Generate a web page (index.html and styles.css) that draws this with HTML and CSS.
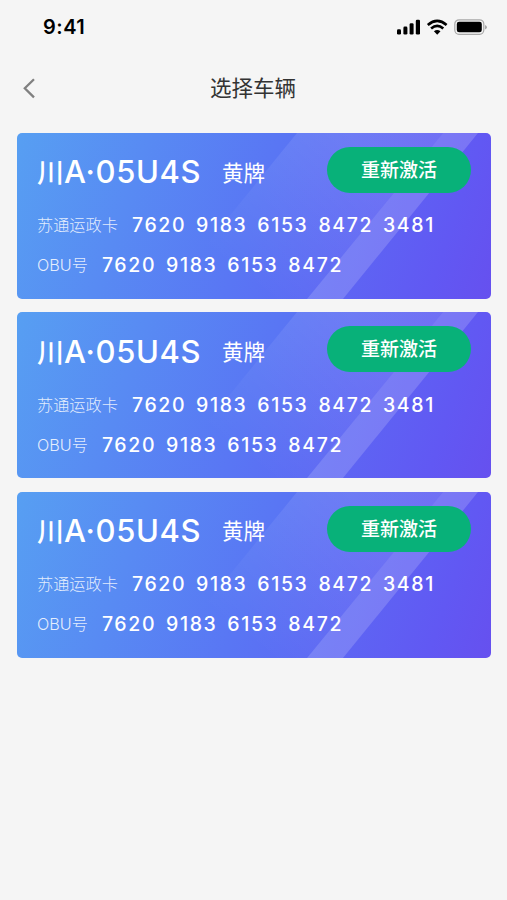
FILE: index.html
```html
<!DOCTYPE html>
<html lang="zh-CN">
<head>
<meta charset="utf-8">
<title>选择车辆</title>
<link rel="stylesheet" href="styles.css">
</head>
<body>
<svg width="0" height="0" class="defs" aria-hidden="true">
  <defs>
    <linearGradient id="haze" gradientUnits="userSpaceOnUse" x1="330" y1="0" x2="220" y2="140">
      <stop offset="0" stop-color="#fff" stop-opacity=".11"/>
      <stop offset="1" stop-color="#fff" stop-opacity="0"/>
    </linearGradient>
    <symbol id="shine" viewBox="0 0 474 166">
      <path d="M280 0H426L290 166H145Z" fill="url(#haze)"/>
      <path d="M426 0H461L326 166H290Z" fill="#fff" fill-opacity=".17"/>
    </symbol>
  </defs>
</svg>
<header class="status">
  <span class="time">9:41</span>
  <svg class="indicators" width="92" height="18" viewBox="0 0 92 18">
    <rect x="2" y="11.2" width="4" height="5.3" rx="1.3"/>
    <rect x="8.4" y="8.6" width="4" height="7.9" rx="1.3"/>
    <rect x="14.6" y="5.3" width="4" height="11.2" rx="1.3"/>
    <rect x="20.8" y="1.8" width="4.2" height="14.7" rx="1.3"/>
    <g fill="none" stroke="#000" stroke-width="2.6">
      <path d="M32.8 6.9Q42.2-1.3 51.6 6.9"/>
      <path d="M36.1 10.5Q42.2 5.1 48.3 10.5"/>
    </g>
    <path d="M38.9 13.2Q42.2 10.6 45.5 13.2L42.2 16.8Z"/>
    <rect x="59.8" y="1.8" width="29" height="14.5" rx="4.2" fill="none" stroke="#a8a8a8" stroke-width="1.2"/>
    <rect x="61.8" y="3.8" width="25" height="10.5" rx="2.3"/>
    <path d="M90 7Q92 8 92 9.2T90 11.6Z" fill="#a8a8a8"/>
  </svg>
</header>
<nav class="nav">
  <svg class="back" width="14" height="22" viewBox="0 0 14 22"><path d="M12 2.2L2.8 11.3L12 20.4" fill="none" stroke="#808080" stroke-width="2.3"/></svg>
  <h1>选择车辆</h1>
</nav>
<main class="cards">
  <section class="card">
    <svg class="shine"><use href="#shine"/></svg>
    <div class="top"><span class="plate"><span class="province">川</span>A·05U4S</span><span class="color">黄牌</span><button>重新激活</button></div>
    <div class="row"><span class="label">苏通运政卡</span><span class="number">7620 9183 6153 8472 3481</span></div>
    <div class="row"><span class="label">OBU号</span><span class="number">7620 9183 6153 8472</span></div>
  </section>
  <section class="card">
    <svg class="shine"><use href="#shine"/></svg>
    <div class="top"><span class="plate"><span class="province">川</span>A·05U4S</span><span class="color">黄牌</span><button>重新激活</button></div>
    <div class="row"><span class="label">苏通运政卡</span><span class="number">7620 9183 6153 8472 3481</span></div>
    <div class="row"><span class="label">OBU号</span><span class="number">7620 9183 6153 8472</span></div>
  </section>
  <section class="card">
    <svg class="shine"><use href="#shine"/></svg>
    <div class="top"><span class="plate"><span class="province">川</span>A·05U4S</span><span class="color">黄牌</span><button>重新激活</button></div>
    <div class="row"><span class="label">苏通运政卡</span><span class="number">7620 9183 6153 8472 3481</span></div>
    <div class="row"><span class="label">OBU号</span><span class="number">7620 9183 6153 8472</span></div>
  </section>
</main>
</body>
</html>
```
FILE: styles.css
```css
* { box-sizing: border-box; }
body {
  margin: 0;
  min-height: 900px;
  background: #f5f5f5;
  font-family: Inter, "Noto Sans CJK SC", sans-serif;
  white-space: nowrap;
}
.defs { position: absolute; }
.status {
  height: 54px;
  padding: 0 20px 0 43px;
  display: flex;
  align-items: center;
  justify-content: space-between;
}
.time { font-size: 20px; font-weight: 600; line-height: 24px; letter-spacing: .5px; }
.nav {
  height: 68px;
  padding: 0 23px 0 22px;
  display: grid;
  grid-template-columns: 14px 1fr 14px;
  align-items: center;
}
.nav h1 {
  margin: 0;
  text-align: center;
  font-size: 21.5px;
  font-weight: 400;
  line-height: 30px;
  color: #333;
}
.cards {
  padding: 11px 16px 0 17px;
  display: grid;
  gap: 13.4px;
}
.card {
  position: relative;
  height: 166px;
  padding: 14px 20px 0;
  border-radius: 5px;
  overflow: hidden;
  color: #fff;
  background: linear-gradient(109deg, #579ff2 0%, #5976f4 50%, #6158f3 88%, #6650ef 100%);
}
.shine {
  position: absolute;
  left: 0;
  top: 0;
  width: 474px;
  height: 166px;
}
.top, .row { position: relative; display: flex; align-items: center; }
.top { height: 46px; margin-bottom: 12px; }
.plate {
  width: 185px;
  padding-top: 6.4px;
  font-size: 31px;
  font-weight: 550;
  line-height: 40px;
  letter-spacing: .6px;
}
.province { font-size: 27px; font-weight: 500; letter-spacing: 0; }
.color { padding-top: 5.4px; font-size: 21.5px; line-height: 30px; }
.top button {
  width: 144px;
  height: 46px;
  margin-left: auto;
  padding: 2px 0 0;
  border: 0;
  border-radius: 23px;
  background: #08b179;
  color: #fff;
  font: 500 19px/44px Inter, "Noto Sans CJK SC", sans-serif;
}
.row { height: 40.3px; }
.label { padding-bottom: 2px; font-size: 16.2px; color: rgba(255, 255, 255, .85); margin-right: 14px; font-weight: 300; }
.number { font-size: 19.5px; font-weight: 500; letter-spacing: 1.62px; word-spacing: 3.1px; }
```
